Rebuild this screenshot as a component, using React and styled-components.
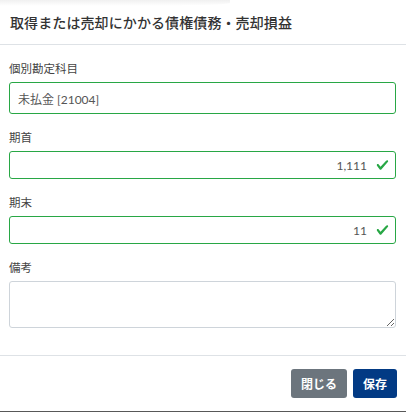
import styled, { createGlobalStyle } from "styled-components";

const GlobalStyle = createGlobalStyle`
  html, body {
    margin: 0;
    padding: 0;
    background: #fff;
  }
  body {
    font-family: "Lato", "Noto Sans CJK JP", sans-serif;
  }
`;

// bootstrapの is-valid っぽいチェック
const CheckIcon = () => (
  <svg width="13" height="13" viewBox="0 0 8 8">
    <path
      fill="#28a745"
      d="M2.3 6.73L.6 4.53c-.4-1.04.46-1.4 1.1-.8l1.1 1.4 3.4-3.8c.6-.63 1.6-.27 1.2.7l-4 4.6c-.43.5-.8.4-1.1.1z"
    />
  </svg>
);

const App = () => {
  return (
    <>
      <GlobalStyle />
      <Modal>
        <Header>
          <Title>取得または売却にかかる債権債務・売却損益</Title>
        </Header>
        <Body>
          <Field>
            <Label>個別勘定科目</Label>
            <Input tall readOnly value="未払金 [21004]" />
          </Field>
          <Field>
            <Label>期首</Label>
            <InputWrap>
              <Input number readOnly value="1,111" />
              <Check>
                <CheckIcon />
              </Check>
            </InputWrap>
          </Field>
          <Field>
            <Label>期末</Label>
            <InputWrap>
              <Input number readOnly value="11" />
              <Check>
                <CheckIcon />
              </Check>
            </InputWrap>
          </Field>
          <Field>
            <Label>備考</Label>
            <Memo rows={2} />
          </Field>
        </Body>
        <Footer>
          <Button>閉じる</Button>
          <Button primary>保存</Button>
        </Footer>
      </Modal>
    </>
  );
};
export default App;

const Modal = styled.div`
  width: 406px;
  height: 412px;
  box-sizing: border-box;
  display: flex;
  flex-direction: column;
  border-bottom: 1px solid #585858;
  position: relative;
  overflow: hidden;
  &::before {
    content: "";
    position: absolute;
    top: 0;
    left: 0;
    width: 230px;
    height: 6px;
    background: linear-gradient(to bottom, rgba(0, 0, 0, 0.06), rgba(0, 0, 0, 0));
    border-radius: 0 0 50% 0;
  }
`;

const Header = styled.div`
  height: 44px;
  display: flex;
  align-items: center;
  padding: 0 10px;
  border-bottom: 1px solid #dee2e6;
`;

const Title = styled.div`
  font-size: 14px;
  font-weight: 500;
  color: #333;
  letter-spacing: 0.1px;
`;

const Body = styled.div`
  display: flex;
  flex-direction: column;
  gap: 15px;
  padding: 15px 10px 27px 9px;
`;

const Field = styled.div`
  display: flex;
  flex-direction: column;
`;

const Label = styled.div`
  font-size: 11.5px;
  line-height: 17px;
  color: #444;
  margin-bottom: 5px;
`;

const InputWrap = styled.div`
  position: relative;
`;

const Input = styled.input`
  width: 100%;
  box-sizing: border-box;
  height: ${(p) => (p.tall ? "32px" : "28px")};
  border: 1px solid #28a745;
  border-radius: 3px;
  padding: ${(p) => (p.number ? "0 28px 0 8px" : "0 8px")};
  font-family: "Lato", "Noto Sans CJK JP", sans-serif;
  font-size: 12px;
  color: #555;
  text-align: ${(p) => (p.number ? "right" : "left")};
  outline: none;
  background: #fff;
`;

const Check = styled.span`
  position: absolute;
  right: 7px;
  top: 50%;
  transform: translateY(-50%);
  display: flex;
`;

const Memo = styled.textarea`
  width: 100%;
  box-sizing: border-box;
  height: 47px;
  border: 1px solid #ced4da;
  border-radius: 3px;
  font-family: "Lato", "Noto Sans CJK JP", sans-serif;
  font-size: 12px;
  padding: 4px 8px;
  outline: none;
`;

const Footer = styled.div`
  flex: 1;
  border-top: 1px solid #dee2e6;
  display: flex;
  justify-content: flex-end;
  align-items: flex-start;
  gap: 6px;
  padding: 13px 9px 0 0;
`;

const Button = styled.div`
  height: 29px;
  padding: 0 10px;
  display: flex;
  align-items: center;
  border-radius: 3px;
  font-size: 12px;
  font-weight: 700;
  color: #fff;
  background-color: ${(p) => (p.primary ? "#023a84" : "#6c757d")};
`;
